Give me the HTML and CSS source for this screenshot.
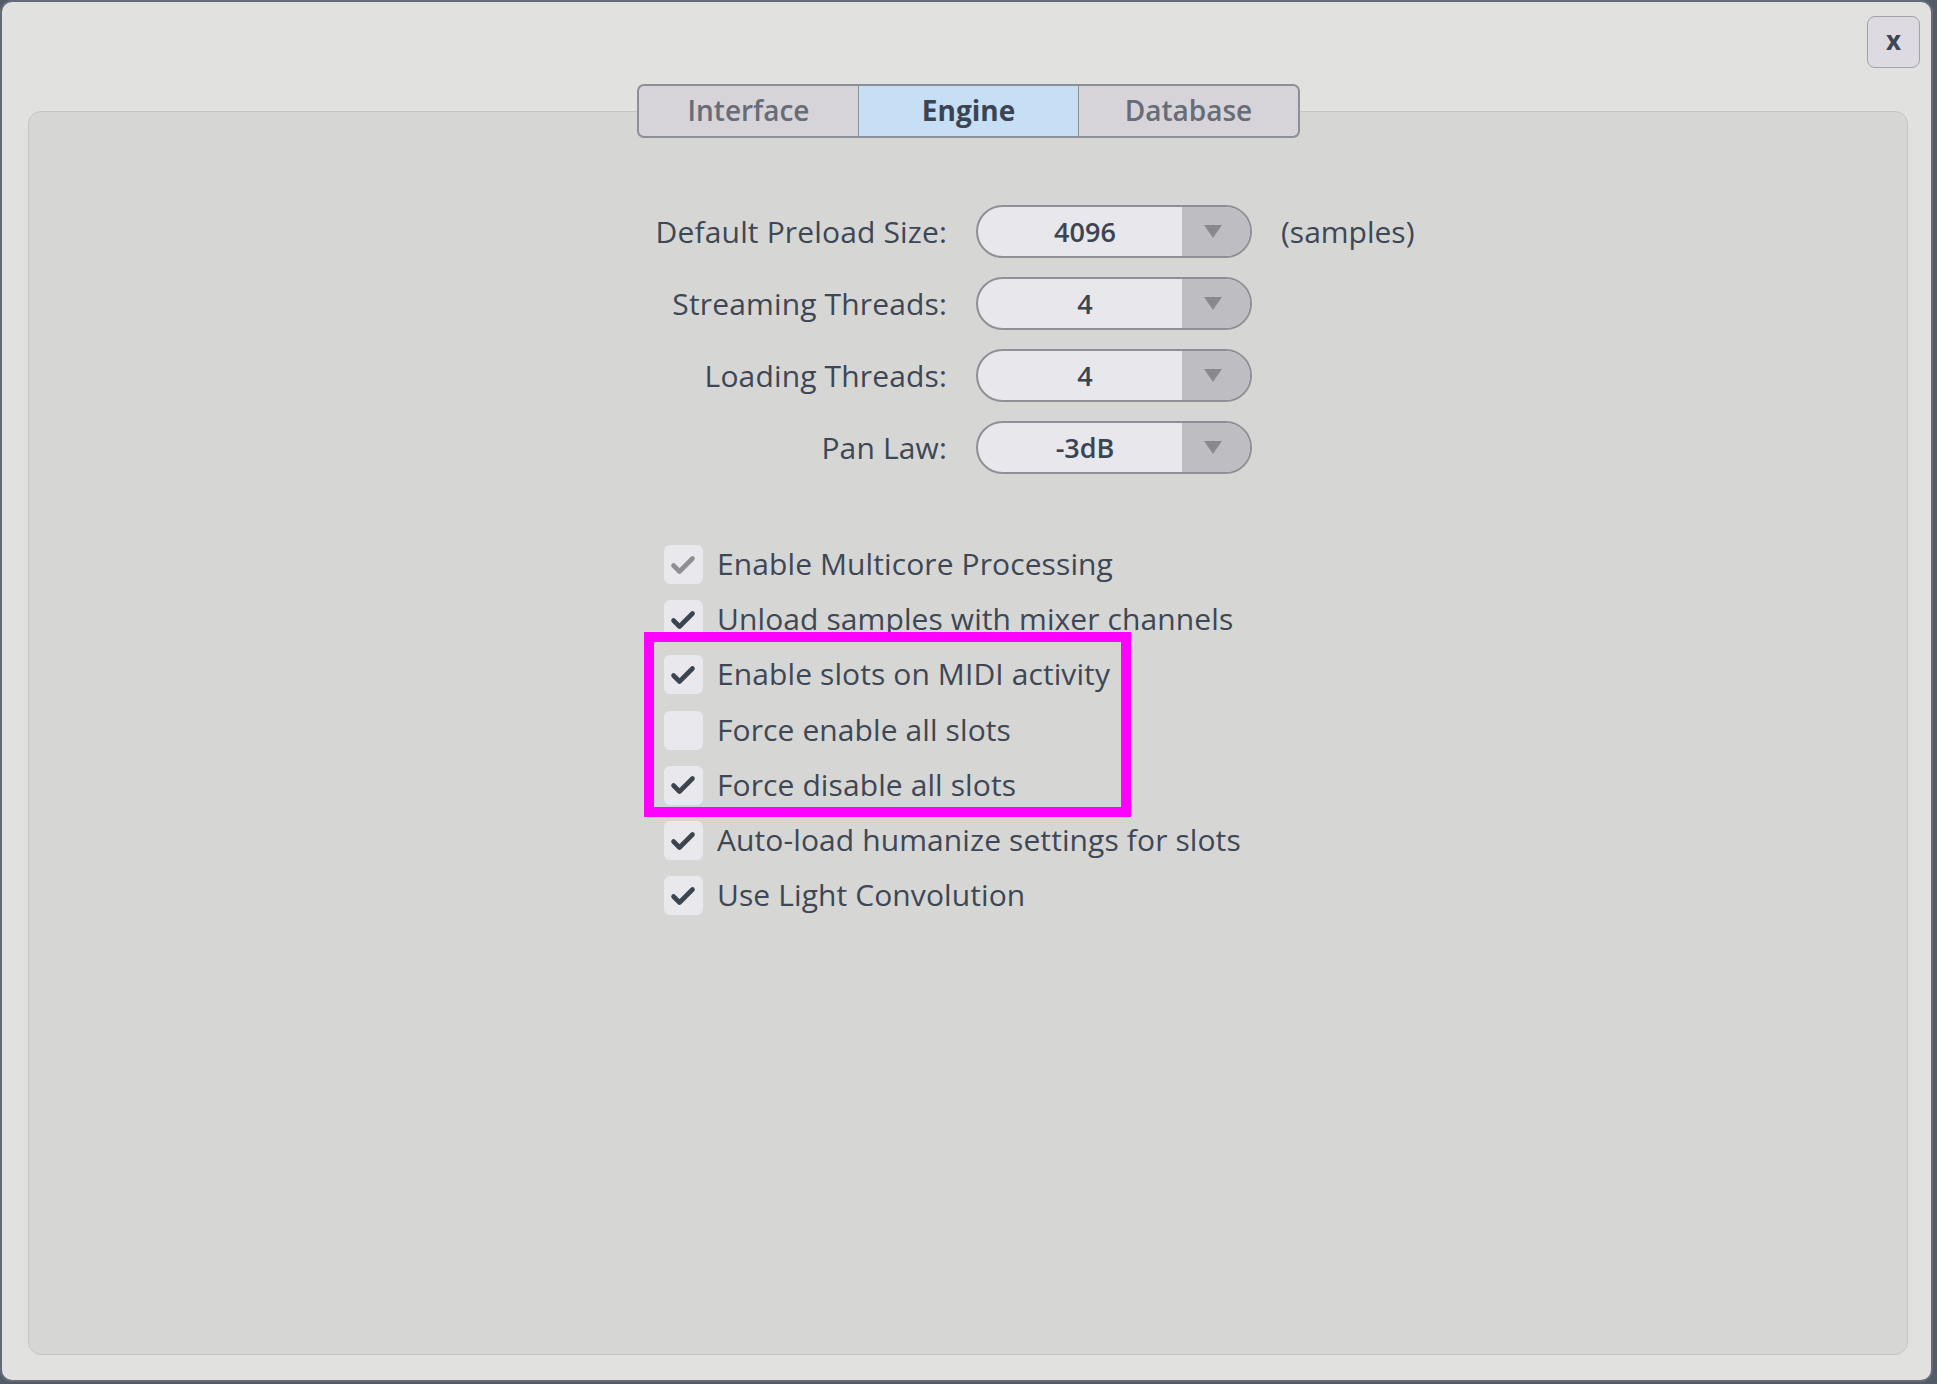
FILE: index.html
```html
<!DOCTYPE html>
<html lang="en">
<head>
<meta charset="utf-8">
<title>Preferences - Engine</title>
<link rel="stylesheet" href="styles.css">
</head>
<body>
<div class="window">
  <div class="header">
    <button class="close">x</button>
  </div>
  <div class="tabs">
    <div class="tab">Interface</div>
    <div class="tab active">Engine</div>
    <div class="tab">Database</div>
  </div>
  <div class="panel">
    <div class="form">
      <div class="label">Default Preload Size:</div>
      <div class="select"><span class="value">4096</span><span class="arrow"><i></i></span></div>
      <div class="suffix">(samples)</div>

      <div class="label">Streaming Threads:</div>
      <div class="select"><span class="value">4</span><span class="arrow"><i></i></span></div>
      <div class="suffix"></div>

      <div class="label">Loading Threads:</div>
      <div class="select"><span class="value">4</span><span class="arrow"><i></i></span></div>
      <div class="suffix"></div>

      <div class="label">Pan Law:</div>
      <div class="select"><span class="value">-3dB</span><span class="arrow"><i></i></span></div>
      <div class="suffix"></div>
    </div>

    <div class="checks">
      <div class="check-row">
        <span class="box disabled"><svg viewBox="0 0 26 22" width="26" height="22"><polyline points="3.5,11.5 9.5,17.5 22.5,4.5"/></svg></span>
        <span class="text">Enable Multicore Processing</span>
      </div>
      <div class="check-row">
        <span class="box"><svg viewBox="0 0 26 22" width="26" height="22"><polyline points="3.5,11.5 9.5,17.5 22.5,4.5"/></svg></span>
        <span class="text">Unload samples with mixer channels</span>
      </div>
      <div class="check-row">
        <span class="box"><svg viewBox="0 0 26 22" width="26" height="22"><polyline points="3.5,11.5 9.5,17.5 22.5,4.5"/></svg></span>
        <span class="text">Enable slots on MIDI activity</span>
      </div>
      <div class="check-row">
        <span class="box"></span>
        <span class="text">Force enable all slots</span>
      </div>
      <div class="check-row">
        <span class="box"><svg viewBox="0 0 26 22" width="26" height="22"><polyline points="3.5,11.5 9.5,17.5 22.5,4.5"/></svg></span>
        <span class="text">Force disable all slots</span>
      </div>
      <div class="check-row">
        <span class="box"><svg viewBox="0 0 26 22" width="26" height="22"><polyline points="3.5,11.5 9.5,17.5 22.5,4.5"/></svg></span>
        <span class="text">Auto-load humanize settings for slots</span>
      </div>
      <div class="check-row">
        <span class="box"><svg viewBox="0 0 26 22" width="26" height="22"><polyline points="3.5,11.5 9.5,17.5 22.5,4.5"/></svg></span>
        <span class="text">Use Light Convolution</span>
      </div>
      <div class="highlight"></div>
    </div>
  </div>
</div>
</body>
</html>
```
FILE: styles.css
```css
* { box-sizing: border-box; }

html, body {
  margin: 0;
  padding: 0;
}

body {
  width: 1937px;
  height: 1384px;
  background: #535a68;
  font-family: "Open Sans", "Noto Sans", "Liberation Sans", sans-serif;
  color: #3d4654;
  overflow: hidden;
}

.window {
  width: 1933px;
  height: 1382px;
  background: #e1e1df;
  border: 2px solid #636a78;
  border-radius: 12px;
  display: flex;
  flex-direction: column;
}

.header {
  display: flex;
  justify-content: flex-end;
  padding: 14px 11px 0 0;
}

.close {
  width: 53px;
  height: 52px;
  background: #dddbe1;
  border: 1.5px solid #a2a2aa;
  border-radius: 8px;
  font-family: "Open Sans", "Noto Sans", sans-serif;
  font-weight: 700;
  font-size: 26px;
  line-height: 1;
  color: #3d4654;
  padding: 0 0 4px 0;
  display: flex;
  align-items: center;
  justify-content: center;
}

.tabs {
  position: relative;
  z-index: 2;
  align-self: flex-start;
  margin: 16px 0 0 635px;
  width: 663px;
  height: 54px;
  display: flex;
  border: 2px solid #8c8f97;
  border-radius: 7px;
  overflow: hidden;
  background: #d6d3d9;
}

.tab {
  flex: 1;
  display: flex;
  align-items: center;
  justify-content: center;
  font-size: 28px;
  font-weight: 600;
  color: #676c77;
  padding-bottom: 2px;
}

.tab + .tab {
  border-left: 1px solid #8c8f97;
}

.tab.active {
  background: #c7dff5;
  color: #3b4453;
  font-weight: 700;
}

.panel {
  position: relative;
  z-index: 1;
  margin: -27px 23px 0 26px;
  height: 1244px;
  background: #d6d6d4;
  border: 1.5px solid #c5c5c3;
  border-radius: 13px;
  padding-top: 93px;
}

.form {
  display: grid;
  grid-template-columns: 918px 276px 1fr;
  column-gap: 29px;
  row-gap: 19px;
  align-items: center;
}

.label {
  text-align: right;
  font-size: 30px;
  letter-spacing: 0.15px;
  white-space: nowrap;
  color: #3e4755;
}

.suffix {
  font-size: 30px;
  color: #3e4755;
}

.select {
  height: 53px;
  display: flex;
  border: 2px solid #8e8f97;
  border-radius: 27px;
  overflow: hidden;
  background: #e8e7ec;
}

.select .value {
  flex: 1;
  display: flex;
  align-items: center;
  justify-content: center;
  padding-left: 10px;
  font-size: 27px;
  font-weight: 600;
  color: #3b4452;
}

.select .arrow {
  width: 68px;
  background: #bebdc2;
  display: flex;
  align-items: center;
  justify-content: center;
  padding-right: 6px;
}

.select .arrow i {
  width: 0;
  height: 0;
  border-left: 9px solid transparent;
  border-right: 9px solid transparent;
  border-top: 13px solid #88888f;
}

.checks {
  position: relative;
  margin: 63px 0 0 635px;
  display: flex;
  flex-direction: column;
  align-items: flex-start;
}

.check-row {
  height: 55.2px;
  display: flex;
  align-items: center;
  gap: 14px;
}

.box {
  width: 39px;
  height: 39px;
  border-radius: 6px;
  background: #e9e8ec;
  display: flex;
  align-items: center;
  justify-content: center;
  padding-right: 2px;
  stroke: #3b4451;
}

.box.disabled {
  stroke: #8e8e94;
}

.box svg {
  display: block;
  fill: none;
  stroke-width: 4.6;
  stroke-linecap: round;
  stroke-linejoin: round;
}

.text {
  font-size: 30px;
  letter-spacing: 0.1px;
  color: #3e4755;
  white-space: nowrap;
  padding-bottom: 2px;
}

.highlight {
  position: absolute;
  left: -20px;
  top: 95px;
  width: 487px;
  height: 185px;
  border: 10px solid #ff00ff;
  pointer-events: none;
}
```
